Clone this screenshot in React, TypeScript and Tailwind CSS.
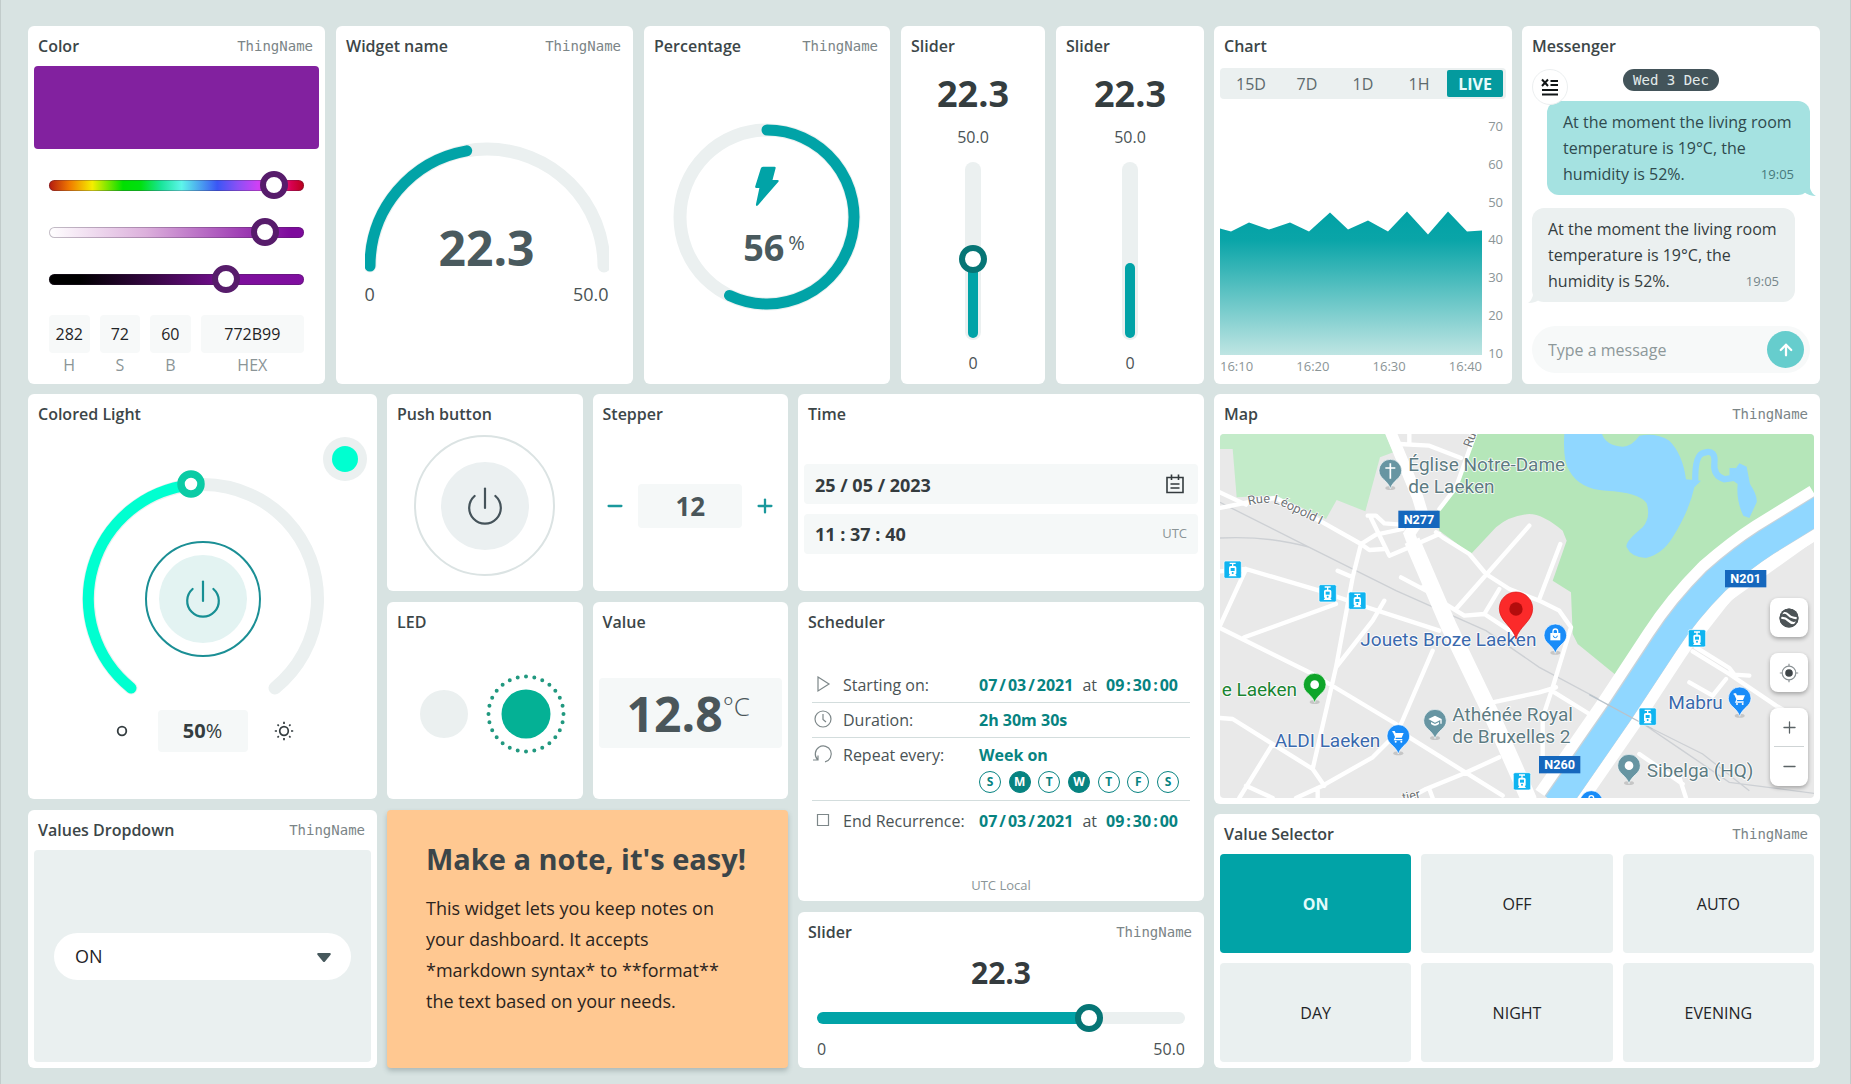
import type { ReactNode } from "react";
import { ArrowUp, Minus, Plus } from "lucide-react";

const TEAL = "#01a3a7";
const TRACK = "#ebf0f0";

function Card({
  title,
  thing,
  children,
}: {
  title: string;
  thing?: boolean;
  children: ReactNode;
}) {
  return (
    <section className="flex min-w-0 flex-col rounded-md bg-white">
      <header className="flex h-10 shrink-0 items-center justify-between pr-3 pl-[10px]">
        <h2 className="text-base font-semibold text-[#3c4648]">{title}</h2>
        {thing && (
          <span className="font-['DejaVu_Sans_Mono',monospace] text-sm text-[#7b8587]">
            ThingName
          </span>
        )}
      </header>
      {children}
    </section>
  );
}

/* ---------- Color ---------- */

const colorTracks = [
  {
    label: "Hue",
    value: 93,
    track:
      "bg-[linear-gradient(90deg,#b3190f_0%,#f07a00_8%,#f5ee00_17%,#00e000_29%,#00e010_36%,#19e59a_44%,#5df5ea_52%,#3a56f5_66%,#8a50f5_74%,#d040f5_82%,#e0209a_91%,#d80050_95%,#b80018_100%)]",
  },
  {
    label: "Saturation",
    value: 89,
    track: "bg-[linear-gradient(90deg,#ffffff,#dcb0dc_38%,#a040b5_75%,#7d0a9c_95%)]",
  },
  {
    label: "Brightness",
    value: 72,
    track: "bg-[linear-gradient(90deg,#000000_12%,#3a0748_42%,#7d0f9c_72%,#800fa0)]",
  },
];

function ColorField({ label, value }: { label: string; value: string }) {
  return (
    <label className="flex min-w-0 flex-col text-center text-base text-[#8b9597]">
      <input
        defaultValue={value}
        className="h-[38px] w-full rounded bg-[#f7f9f9] text-center text-[#1f2427]"
      />
      <span className="leading-6">{label}</span>
    </label>
  );
}

function ColorCard() {
  return (
    <Card title="Color" thing>
      <div className="mx-[6px] h-[83px] rounded bg-[#82219f]" />
      <div className="mx-[21px] mt-[22px] flex flex-col gap-[19px]">
        {colorTracks.map((t) => (
          <div key={t.label} className="flex h-7 items-center">
            <input
              type="range"
              aria-label={t.label}
              defaultValue={t.value}
              className={
                "h-[11px] w-full appearance-none rounded-full shadow-[inset_0_0_0_1px_rgba(60,40,70,0.3)] [&::-webkit-slider-thumb]:size-7 [&::-webkit-slider-thumb]:appearance-none [&::-webkit-slider-thumb]:rounded-full [&::-webkit-slider-thumb]:border-[6px] [&::-webkit-slider-thumb]:border-[#571c6b] [&::-webkit-slider-thumb]:bg-white " +
                t.track
              }
            />
          </div>
        ))}
      </div>
      <div className="mx-[21px] mt-[22px] mb-1 grid grid-cols-[40fr_40fr_40fr_102fr] gap-[10px]">
        <ColorField label="H" value="282" />
        <ColorField label="S" value="72" />
        <ColorField label="B" value="60" />
        <ColorField label="HEX" value="772B99" />
      </div>
    </Card>
  );
}

/* ---------- Gauges ---------- */

function GaugeCard() {
  return (
    <Card title="Widget name" thing>
      <div className="flex flex-1 flex-col items-center justify-center pl-1">
        <div className="w-[244px]">
          <div className="relative">
            <svg viewBox="0 0 244 138" className="block w-full" fill="none" strokeLinecap="round">
              <path d="M5 126A117 117 0 0 1 239 126" stroke={TRACK} strokeWidth="13" />
              <path d="M5 126A117 117 0 0 1 101.7 10.8" stroke={TEAL} strokeWidth="11" />
            </svg>
            <span className="absolute inset-x-0 bottom-0 text-center text-5xl leading-[60px] font-bold text-[#4a5a5e]">
              22.3
            </span>
          </div>
          <div className="flex justify-between text-lg leading-8 text-[#4a5355]">
            <span>0</span>
            <span>50.0</span>
          </div>
        </div>
      </div>
    </Card>
  );
}

function PercentageCard() {
  return (
    <Card title="Percentage" thing>
      <div className="flex flex-1 items-center justify-center pb-4">
        <div className="relative size-[188px]">
          <svg viewBox="0 0 188 188" className="size-full" fill="none" strokeLinecap="round">
            <circle cx="94" cy="94" r="87" stroke={TRACK} strokeWidth="13" />
            <path d="M94 7A87 87 0 1 1 56.5 172.5" stroke={TEAL} strokeWidth="11" />
          </svg>
          <div className="absolute inset-0 flex flex-col items-center pt-[43px]">
            <svg viewBox="0 0 24 40" className="h-10 w-6" fill={TEAL}>
              <path d="M8 .8H19.5Q21 .8 20.6 2.3L17.5 14H22.4Q24.4 14 23.4 15.8L3 39.2Q1 41 .9 38.6L4.4 22H1.5Q-.2 22 .2 20.4L5.8 2.4Q6.3.8 8 .8Z" />
            </svg>
            <p className="mt-4 flex items-start pl-[14px] text-[#4a5a5e]">
              <span className="text-4xl leading-[52px] font-bold">56</span>
              <span className="pl-1 text-xl leading-[42px]">%</span>
            </p>
          </div>
        </div>
      </div>
    </Card>
  );
}

function VerticalScale({ title, children }: { title: string; children: ReactNode }) {
  return (
    <Card title={title}>
      <div className="flex flex-1 flex-col items-center pb-[6px] text-base text-[#4a5355]">
        <span className="text-4xl leading-[56px] font-bold text-[#343d3f]">22.3</span>
        <span className="leading-[30px]">50.0</span>
        <div className="mt-[10px] mb-2 flex min-h-24 w-4 flex-1 flex-col rounded-full bg-[#ebf0f0] px-[3px] py-[2px]">
          {children}
        </div>
        <span className="leading-[30px]">0</span>
      </div>
    </Card>
  );
}

function VerticalSliderCard() {
  return (
    <VerticalScale title="Slider">
      <input
        type="range"
        aria-label="Vertical slider"
        min={0}
        max={50}
        step={0.1}
        defaultValue={22.3}
        className="min-h-0 w-[10px] flex-1 appearance-none rounded-full bg-[linear-gradient(0deg,#01a3a7_45%,transparent_45%)] [direction:rtl] [writing-mode:vertical-lr] [&::-webkit-slider-thumb]:size-7 [&::-webkit-slider-thumb]:appearance-none [&::-webkit-slider-thumb]:rounded-full [&::-webkit-slider-thumb]:border-[6px] [&::-webkit-slider-thumb]:border-[#067575] [&::-webkit-slider-thumb]:bg-white"
      />
    </VerticalScale>
  );
}

function VerticalMeterCard() {
  return (
    <VerticalScale title="Slider">
      <div className="flex flex-1 flex-col justify-end">
        <div className="h-[43%] rounded-full bg-[#01a3a7]" />
      </div>
    </VerticalScale>
  );
}

/* ---------- Chart ---------- */

function ChartCard() {
  return (
    <Card title="Chart">
      <div className="mx-[6px] mt-[2px] grid h-[31px] grid-cols-5 rounded bg-[#ebf0f0] px-[3px] py-[2px] text-base text-[#5d6a6d]">
        {["15D", "7D", "1D", "1H"].map((t) => (
          <button key={t} type="button">
            {t}
          </button>
        ))}
        <button type="button" className="rounded-xs bg-[#049a9e] font-bold text-[#e9fbfb]">
          LIVE
        </button>
      </div>
      <div className="mx-[6px] mt-[17px] mb-[6px] flex flex-1 text-[13px] text-[#8b9597]">
        <div className="flex flex-1 flex-col">
          <div className="relative flex-1">
            <svg
              viewBox="0 0 262 238"
              preserveAspectRatio="none"
              className="absolute inset-0 size-full"
            >
              <defs>
                <linearGradient id="area" x1="0" y1="95" x2="0" y2="238" gradientUnits="userSpaceOnUse">
                  <stop offset="0" stopColor="#01a1a5" />
                  <stop offset="0.2" stopColor="#0aa5a8" />
                  <stop offset="1" stopColor="#bfe5e3" />
                </linearGradient>
              </defs>
              <path
                fill="url(#area)"
                d="M0 112L11 115L29 106L49 113L70 106L89 115L110 96L128 113L148 104L168 115L187 95L208 118L228 95L247 115L262 114V238H0Z"
              />
            </svg>
          </div>
          <div className="flex h-[23px] items-center justify-between">
            <span>16:10</span>
            <span>16:20</span>
            <span>16:30</span>
            <span>16:40</span>
          </div>
        </div>
        <div className="mb-[15px] flex w-6 flex-col justify-between pr-[3px] text-right leading-5">
          {[70, 60, 50, 40, 30, 20, 10].map((n) => (
            <span key={n}>{n}</span>
          ))}
        </div>
      </div>
    </Card>
  );
}

/* ---------- Messenger ---------- */

const MESSAGE = "At the moment the living room temperature is 19°C, the humidity is 52%.";

function MessengerCard() {
  return (
    <Card title="Messenger">
      <div className="relative mx-[10px] mt-[3px] h-8">
        <button
          type="button"
          aria-label="Clear messages"
          className="absolute top-0 left-0 z-10 flex size-9 items-center justify-center rounded-full border border-[#eceff0] bg-white"
        >
          <svg viewBox="0 0 18 18" className="size-[18px]" stroke="#101516" strokeWidth="2" fill="none">
            <path d="M1 1.5L7 8M7 1.5L1 8M9.5 3H17M9.5 7H17M1 12H17M1 16.5H17" />
          </svg>
        </button>
        <p className="mx-auto h-[22px] w-fit rounded-full bg-[#43545a] px-[10px] font-['DejaVu_Sans_Mono',monospace] text-sm leading-[22px] text-[#e3ebeb]">
          Wed 3 Dec
        </p>
      </div>
      <div className="relative mr-[10px] ml-[25px] rounded-xl bg-[#a5e2e1] px-4 py-2 text-base leading-[26px] text-[#2f4a4e]">
        <p>
          {MESSAGE}
          <span className="float-right text-[13px] text-[#47797c]">19:05</span>
        </p>
        <svg viewBox="0 0 16 14" className="absolute -right-[6px] -bottom-px h-[14px] w-4" fill="#a5e2e1">
          <path d="M10 0V6Q11 11 16 14Q9 14 4 10Z" />
        </svg>
      </div>
      <div className="relative mt-[13px] mr-[25px] ml-[10px] rounded-xl bg-[#ebf0f0] px-4 py-2 text-base leading-[26px] text-[#343d40]">
        <p>
          {MESSAGE}
          <span className="float-right text-[13px] text-[#76868a]">19:05</span>
        </p>
        <svg viewBox="0 0 16 14" className="absolute -bottom-px -left-[4px] h-[14px] w-4" fill="#ebf0f0">
          <path d="M5 0V6Q4 11 0 14Q8 14 12 10Z" />
        </svg>
      </div>
      <form className="mx-[10px] mt-auto mb-[11px] flex h-[47px] items-center rounded-full bg-[#f7f9f9] pr-[6px] pl-4">
        <input
          aria-label="Message"
          placeholder="Type a message"
          className="min-w-0 flex-1 text-base placeholder:text-[#8d989a]"
        />
        <button
          type="button"
          aria-label="Send"
          className="flex size-[37px] items-center justify-center rounded-full bg-[#66cdcd] text-white"
        >
          <ArrowUp size={18} strokeWidth={3} />
        </button>
      </form>
    </Card>
  );
}

/* ---------- Switches ---------- */

function PowerIcon({ color }: { color: string }) {
  return (
    <svg viewBox="0 0 40 40" className="size-10" fill="none" stroke={color} strokeWidth="2.2" strokeLinecap="round">
      <path d="M20 2.5V22" />
      <path d="M9.6 10A15.8 15.8 0 1 0 30.4 10" />
    </svg>
  );
}

function ColoredLightCard() {
  return (
    <div className="relative grid">
      <Card title="Colored Light">
        <div className="flex flex-1 flex-col items-center justify-center pb-[10px]">
          <div className="relative h-[236px] w-64">
            <svg viewBox="0 0 256 236" className="size-full overflow-visible" fill="none" strokeLinecap="round">
              <path d="M56 217A114.5 114.5 0 1 1 200 217" stroke={TRACK} strokeWidth="13" />
              <path d="M56 217A114.5 114.5 0 0 1 116 14" stroke="#00ffd0" strokeWidth="11" />
              <circle cx="116" cy="13" r="10" fill="#fff" stroke="#0bcba5" strokeWidth="7.5" />
            </svg>
            <button
              type="button"
              aria-label="Toggle light"
              className="absolute top-[70px] left-[70px] flex size-[116px] items-center justify-center rounded-full border-2 border-[#1b8f95]"
            >
              <span className="flex size-[88px] items-center justify-center rounded-full bg-[#e3f3f2]">
                <PowerIcon color="#178f94" />
              </span>
            </button>
          </div>
          <div className="mt-[3px] flex items-center gap-[26px]">
            <svg viewBox="0 0 20 20" className="size-5" fill="none" stroke="#343d40" strokeWidth="1.8">
              <circle cx="10" cy="10" r="4.3" />
            </svg>
            <p className="w-[90px] rounded bg-[#f5f8f8] text-center text-xl leading-[42px] text-[#343d40]">
              <b>50</b>%
            </p>
            <svg viewBox="0 0 20 20" className="size-5" fill="none" stroke="#343d40" strokeWidth="1.7">
              <circle cx="10" cy="10" r="4.3" />
              <path d="M10 .8V3M10 17V19.2M.8 10H3M17 10H19.2M3.5 3.5L4.8 4.8M15.2 15.2L16.5 16.5M3.5 16.5L4.8 15.2M15.2 4.8L16.5 3.5" />
            </svg>
          </div>
        </div>
      </Card>
      <button
        type="button"
        aria-label="Light colour"
        className="absolute top-[43px] right-[10px] flex size-11 items-center justify-center rounded-full bg-[#ebf0f0]"
      >
        <span className="size-[26px] rounded-full bg-[#00ffd0]" />
      </button>
    </div>
  );
}

function PushButtonCard() {
  return (
    <Card title="Push button">
      <div className="flex flex-1 items-center justify-center pb-[14px]">
        <button
          type="button"
          aria-label="Power"
          className="flex size-[141px] items-center justify-center rounded-full border-2 border-[#dbe3e3]"
        >
          <span className="flex size-[88px] items-center justify-center rounded-full bg-[#ebf0f1]">
            <PowerIcon color="#45535a" />
          </span>
        </button>
      </div>
    </Card>
  );
}

function StepperCard() {
  return (
    <Card title="Stepper">
      <div className="flex flex-1 items-center justify-center gap-3 px-3 pb-[14px] text-[#1a989c]">
        <button type="button" aria-label="Decrease">
          <Minus size={22} strokeWidth={2.5} />
        </button>
        <input
          aria-label="Steps"
          defaultValue="12"
          className="h-11 w-[104px] rounded bg-[#f5f8f8] text-center text-[26px] font-bold text-[#4a565a]"
        />
        <button type="button" aria-label="Increase">
          <Plus size={22} strokeWidth={2.5} />
        </button>
      </div>
    </Card>
  );
}

function LedCard() {
  return (
    <Card title="LED">
      <div className="flex flex-1 items-center justify-end gap-[18px] pr-[17px] pb-[14px]">
        <span className="size-12 rounded-full bg-[#ebf0f0]" />
        <svg viewBox="0 0 80 80" className="size-20">
          <circle cx="40" cy="40" r="24.5" fill="#04b195" />
          <circle
            cx="40"
            cy="40"
            r="37.5"
            fill="none"
            stroke="#21987f"
            strokeWidth="4"
            strokeLinecap="round"
            pathLength={28}
            strokeDasharray="0 1"
          />
        </svg>
      </div>
    </Card>
  );
}

function ValueCard() {
  return (
    <Card title="Value">
      <div className="flex flex-1 items-center px-[6px] pb-4">
        <p className="flex h-[70px] flex-1 items-start justify-center rounded bg-[#f5f8f8] pr-1 text-[#4a565a]">
          <span className="text-5xl leading-[72px] font-bold">12.8</span>
          <span className="text-[26px] leading-[56px] font-light">°C</span>
        </p>
      </div>
    </Card>
  );
}

function DropdownCard() {
  return (
    <Card title="Values Dropdown" thing>
      <div className="mx-[6px] mb-[6px] flex flex-1 items-center rounded bg-[#eaf0f0] px-5">
        <div className="relative flex-1">
          <select
            aria-label="Value"
            className="h-[47px] w-full appearance-none rounded-full bg-white px-[21px] text-lg text-[#1f2427]"
          >
            <option>ON</option>
            <option>OFF</option>
          </select>
          <svg viewBox="0 0 14 9" className="pointer-events-none absolute top-5 right-5 h-[9px] w-[14px]" fill="#46585c">
            <path d="M1.2 0H12.8Q14.4.4 13.4 2L8 8.4Q7 9.4 6 8.4L.6 2Q-.4.4 1.2 0Z" />
          </svg>
        </div>
      </div>
    </Card>
  );
}

function NoteCard() {
  return (
    <article className="rounded-sm bg-[#ffc891] px-[39px] pt-[29px] shadow-[0_3px_5px_rgba(70,90,90,0.3)]">
      <h2 className="text-[29px] leading-10 font-bold text-[#3b4549]">Make a note, it's easy!</h2>
      <p className="mt-[14px] text-lg leading-[31px] text-[#2b241d]">
        This widget lets you keep notes on your dashboard. It accepts *markdown syntax* to
        **format** the text based on your needs.
      </p>
    </article>
  );
}

/* ---------- Time and schedule ---------- */

function TimeCard() {
  return (
    <Card title="Time">
      <div className="flex flex-1 flex-col justify-center gap-[10px] px-[6px] pb-2 text-lg font-bold text-[#343b3e]">
        <div className="flex h-10 items-center rounded bg-[#f5f8f8] pr-[14px] pl-[11px]">
          <input aria-label="Date" defaultValue="25 / 05 / 2023" className="min-w-0 flex-1 pt-[3px]" />
          <svg viewBox="0 0 18 20" className="h-5 w-[18px]" fill="none" stroke="#343b3e" strokeWidth="1.6">
            <path d="M1 3.5H17V18.5H1ZM5.5 .5V6M12.5 .5V6M4.5 10H13.5M4.5 14H13.5" />
          </svg>
        </div>
        <div className="flex h-10 items-center rounded bg-[#f5f8f8] px-[11px]">
          <input aria-label="Time" defaultValue="11 : 37 : 40" className="min-w-0 flex-1" />
          <span className="text-[13px] font-normal text-[#8b9597]">UTC</span>
        </div>
      </div>
    </Card>
  );
}

function DateTime() {
  return (
    <span className="flex items-center gap-[9px] font-bold text-[#078381]">
      <span className="flex gap-[2px]">
        <span>07</span>
        <span>/</span>
        <span>03</span>
        <span>/</span>
        <span>2021</span>
      </span>
      <span className="font-normal text-[#4a5355]">at</span>
      <span className="flex gap-[2px]">
        <span>09</span>
        <span>:</span>
        <span>30</span>
        <span>:</span>
        <span>00</span>
      </span>
    </span>
  );
}

const scheduleIcons = {
  start: "M4 2L15 9L4 16Z",
  duration: "M9 1A8 8 0 1 1 9 17A8 8 0 1 1 9 1M9 4V9.5L12 12",
  repeat: "M3.5 14.5A8 8 0 1 1 11 16.8M4 10.5V15H-1",
  end: "M3.5 3.5H14.5V14.5H3.5Z",
};

function ScheduleRow({
  icon,
  label,
  children,
}: {
  icon: keyof typeof scheduleIcons;
  label: string;
  children: ReactNode;
}) {
  return (
    <div className="flex border-b border-[#d3dddd] py-[5px] text-base leading-6 last:border-b-0">
      <svg
        viewBox="0 0 18 18"
        className="mx-[2px] mt-[2px] size-[18px] overflow-visible"
        fill="none"
        stroke="#7d8789"
        strokeWidth="1.2"
      >
        <path d={scheduleIcons[icon]} />
      </svg>
      <span className="ml-[9px] w-[136px] text-[#4a5355]">{label}</span>
      {children}
    </div>
  );
}

function SchedulerCard() {
  const days = ["S", "M", "T", "W", "T", "F", "S"];
  return (
    <Card title="Scheduler">
      <div className="mx-[14px] mt-[26px]">
        <ScheduleRow icon="start" label="Starting on:">
          <DateTime />
        </ScheduleRow>
        <ScheduleRow icon="duration" label="Duration:">
          <b className="text-[#078381]">2h 30m 30s</b>
        </ScheduleRow>
        <ScheduleRow icon="repeat" label="Repeat every:">
          <div>
            <b className="text-[#078381]">Week on</b>
            <div className="mt-1 mb-[2px] flex w-[200px] justify-between">
              {days.map((d, i) => (
                <button
                  key={i}
                  type="button"
                  aria-pressed={i === 1 || i === 3}
                  className="flex size-[22px] items-center justify-center rounded-full border border-[#078381] text-xs font-bold text-[#078381] aria-pressed:bg-[#078381] aria-pressed:text-white"
                >
                  {d}
                </button>
              ))}
            </div>
          </div>
        </ScheduleRow>
        <div className="pt-[3px]">
          <ScheduleRow icon="end" label="End Recurrence:">
            <DateTime />
          </ScheduleRow>
        </div>
      </div>
      <p className="mt-auto pb-[6px] text-center text-[13px] leading-5 text-[#8b9597]">UTC Local</p>
    </Card>
  );
}

function HorizontalSliderCard() {
  return (
    <Card title="Slider" thing>
      <p className="text-center text-[30px] leading-[42px] font-bold text-[#343b3e]">22.3</p>
      <div className="mx-[19px] mt-[10px] flex h-7 items-center">
        <input
          type="range"
          aria-label="Horizontal slider"
          defaultValue={76}
          className="h-3 w-full appearance-none rounded-full bg-[linear-gradient(90deg,#01a3a7_74%,#ebf0f0_74%)] [&::-webkit-slider-thumb]:size-7 [&::-webkit-slider-thumb]:appearance-none [&::-webkit-slider-thumb]:rounded-full [&::-webkit-slider-thumb]:border-[6px] [&::-webkit-slider-thumb]:border-[#067575] [&::-webkit-slider-thumb]:bg-white"
        />
      </div>
      <div className="mx-[19px] mt-[5px] flex justify-between text-base leading-6 text-[#4a5355]">
        <span>0</span>
        <span>50.0</span>
      </div>
    </Card>
  );
}

/* ---------- Map ---------- */

type Glyph = "cross" | "dot" | "cart" | "cap" | "bag" | "none";

function Pin({ x, y, color, glyph }: { x: number; y: number; color: string; glyph: Glyph }) {
  return (
    <g transform={`translate(${x} ${y})`}>
      <ellipse cx="0" cy="52" rx="15" ry="6" fill="#000" opacity="0.15" />
      <path d="M0 -34A34 34 0 0 1 34 0C34 24 8 28 0 54C-8 28 -34 24 -34 0A34 34 0 0 1 0 -34Z" fill={color} stroke="#fff" strokeWidth="2" />
      {glyph === "cross" && <path d="M0 -22V24M-15 -8H15" stroke="#fff" strokeWidth="5" />}
      {glyph === "dot" && <circle r="13" fill="#fff" />}
      {glyph === "cart" && (
        <g fill="#fff">
          <path d="M-18 -15H-11L-8 -9H16L10 5H-7L-9 9H12V13H-14L-10 3L-16 -11H-18Z" />
          <circle cx="-8" cy="17" r="3" />
          <circle cx="9" cy="17" r="3" />
        </g>
      )}
      {glyph === "cap" && (
        <path d="M-20 -5L0 -15L20 -5V9H16V-2L0 6ZM-12 4V10Q0 20 12 10V4L0 10Z" fill="#fff" />
      )}
      {glyph === "bag" && (
        <g>
          <path d="M-15 -7H15V15H-15Z" fill="#fff" />
          <path d="M-7 -6V-12A7 7 0 0 1 7 -12V-6" stroke="#fff" strokeWidth="4" fill="none" />
          <path d="M-6 1A6 6 0 0 0 6 1" stroke={color} strokeWidth="3" fill="none" />
        </g>
      )}
    </g>
  );
}

function Tram({ x, y }: { x: number; y: number }) {
  return (
    <g transform={`translate(${x} ${y})`}>
      <rect x="-26" y="-26" width="52" height="52" rx="5" fill="#0fb4f0" stroke="#fff" strokeWidth="2" />
      <path d="M-9 -19H9M0 -19V-10" stroke="#fff" strokeWidth="4" fill="none" />
      <path d="M-6 -11H6Q11 -11 11 -6V11Q11 14 8 14L12 20H-12L-8 14Q-11 14 -11 11V-6Q-11 -11 -6 -11Z" fill="#fff" />
      <path d="M-6 -5H6V4H-6Z" fill="#0fb4f0" />
      <circle cx="0" cy="10" r="3" fill="#0fb4f0" />
    </g>
  );
}

function RoadSign({ x, y, name }: { x: number; y: number; name: string }) {
  return (
    <g>
      <rect x={x} y={y} width="124" height="52" fill="#1567bd" />
      <text x={x + 62} y={y + 39} textAnchor="middle" fontSize="38" fontWeight="700" fill="#fff">
        {name}
      </text>
    </g>
  );
}

const minorRoads =
  "M32 335L110 372M32 382L140 360L200 352L340 425L455 490L500 462L580 445M455 490L430 590L380 860L310 1165L345 1215M455 490L480 508L525 505M475 405H500L525 428L575 432M485 412L540 525L600 500L690 460M680 455L700 470L780 520L830 580L900 625L990 660L1050 690L1085 740L1030 920L1000 1010V1140M960 435L740 685M640 620L700 665L765 705L825 700L920 762M870 625L825 700M575 590L650 630M32 572L110 565L330 630L480 682L690 750M110 565L32 735M32 742L310 880L560 1030L600 1070L880 1245M105 770L380 670M525 660L490 720L380 860M385 570L430 590M670 810L575 1030M560 1060L490 1130L340 1215L260 1252M32 1012L70 1015L310 1165M190 1090L90 1252M110 1215L190 1252M325 1222V1252M870 1130L760 1180L650 1225L600 1252M660 1225L670 1252M850 965L990 935L1040 920M1035 935L1140 1000M570 190L660 195L755 232M600 160V190M797 160L740 320L690 385M1053 490L990 655M1450 812L1560 880L1700 975L1780 1020M1460 800L1560 862L1575 882L1620 885M1440 905L1510 945L1550 895M1830 462L1560 655L1470 770M1290 1120L1420 1210M1410 1190L1430 1252";

function MapDrawing() {
  return (
    <svg
      viewBox="32 160 1782 1092"
      preserveAspectRatio="xMidYMid slice"
      className="absolute inset-0 size-full font-['Roboto',sans-serif]"
      fill="none"
    >
      <rect x="32" y="160" width="1782" height="1092" fill="#e9e9e9" />
      <path d="M32 160H528L552 215L512 230L468 392L382 358L350 415L200 345L82 350L70 205H32Z" fill="#c3ebc9" />
      <path
        d="M800 160H1830V330L1620 440L1530 515L1440 600L1290 790L1222 885L1105 790L1090 760L1085 635L1030 600L1072 480L1060 450Q1000 400 960 400Q900 405 860 440L785 520L690 450L680 395L740 320Z"
        fill="#b5e6b9"
      />
      <path
        d="M1065 160Q1060 240 1080 270Q1110 325 1190 330Q1290 335 1312 368Q1325 410 1300 440Q1245 485 1252 500Q1265 530 1310 532Q1360 520 1390 470Q1440 390 1455 320L1475 300L1430 296Q1420 220 1380 180Q1340 155 1290 165Q1270 195 1240 198Q1190 195 1178 160Z"
        fill="#90d7ff"
      />
      <path d="M1458 308Q1455 220 1485 216Q1520 205 1515 250Q1512 285 1545 296L1570 292V262" stroke="#90d7ff" strokeWidth="19" />
      <path d="M1590 248L1612 258L1622 310Q1645 345 1642 365L1620 412L1602 405Q1580 360 1585 310L1560 292Z" fill="#90d7ff" />

      <path
        d="M32 365L300 500L560 630L830 750L990 860L1280 1015L1420 1110L1560 1205L1830 1240M32 472Q180 465 300 500M1330 1045L1480 1120L1620 1230"
        stroke="#cdd0d4"
        strokeWidth="4"
      />
      <path d={minorRoads} stroke="#fff" strokeWidth="13" strokeLinejoin="round" strokeLinecap="round" />
      <path d="M542 150L625 350L640 400L600 460L615 500L700 680" stroke="#fff" strokeWidth="34" />
      <path d="M608 480L720 740L850 1010L930 1190L960 1260" stroke="#fff" strokeWidth="48" />

      <path
        d="M1040 1270L1227 1000L1365 790Q1430 690 1520 600Q1600 530 1670 485L1840 380"
        stroke="#fff"
        strokeWidth="150"
      />
      <path
        d="M1040 1270L1227 1000L1365 790Q1430 690 1520 600Q1600 530 1670 485L1840 380"
        stroke="#c9d3da"
        strokeWidth="84"
      />
      <path
        d="M1042 1270L1229 1000L1367 790Q1432 690 1522 600Q1602 530 1672 485L1842 380"
        stroke="#90d7ff"
        strokeWidth="79"
      />
      <path d="M1140 942L1330 1045" stroke="#b9c3cb" strokeWidth="4" />

      <Tram x={70} y={567} />
      <Tram x={355} y={638} />
      <Tram x={444} y={660} />
      <Tram x={938} y={1202} />
      <Tram x={1463} y={773} />
      <Tram x={1315} y={1008} />
      <Pin x={543} y={270} color="#6795a2" glyph="cross" />
      <Pin x={316} y={912} color="#0fa52a" glyph="dot" />
      <Pin x={567} y={1066} color="#198cf8" glyph="cart" />
      <Pin x={677} y={1020} color="#6795a2" glyph="cap" />
      <Pin x={1038} y={764} color="#198cf8" glyph="bag" />
      <Pin x={1591} y={953} color="#198cf8" glyph="cart" />
      <Pin x={1259} y={1155} color="#6795a2" glyph="dot" />
      <Pin x={1146} y={1264} color="#198cf8" glyph="bag" />

      <g fontSize="57" stroke="#fff" strokeWidth="5" strokeLinejoin="round" paintOrder="stroke">
        <g fill="#5d7b82">
          <text x="597" y="271">Église Notre-Dame</text>
          <text x="597" y="336">de Laeken</text>
          <text x="729" y="1022">Athénée Royal</text>
          <text x="729" y="1087">de Bruxelles 2</text>
          <text x="1312" y="1189">Sibelga (HQ)</text>
        </g>
        <g fill="#3a69ad">
          <text x="453" y="797">Jouets Broze Laeken</text>
          <text x="196" y="1100">ALDI Laeken</text>
          <text x="1377" y="986">Mabru</text>
        </g>
        <text x="37" y="945" fill="#1a8432">
          e Laeken
        </text>
      </g>
      <path id="leopold" d="M118 374Q185 356 230 382L360 446" />
      <g fontSize="38" fill="#6d7275" stroke="#fff" strokeWidth="4" paintOrder="stroke">
        <text>
          <textPath href="#leopold">Rue Léopold I</textPath>
        </text>
        <text transform="translate(786 202) rotate(-70)">Ru</text>
        <text transform="translate(582 1264) rotate(-14)">tier</text>
      </g>
      <RoadSign x={567} y={390} name="N277" />
      <RoadSign x={1547} y={568} name="N201" />
      <RoadSign x={989} y={1126} name="N260" />

      <path d="M920 775C912 738 870 722 870 684A50 50 0 0 1 970 684C970 722 928 738 920 775Z" fill="#fb2a2a" stroke="#d11" strokeWidth="2" />
      <circle cx="920" cy="685" r="20" fill="#b30d0d" />
    </svg>
  );
}

function MapCard() {
  return (
    <Card title="Map" thing>
      <div className="relative mx-[6px] mb-[6px] flex-1 overflow-hidden rounded">
        <MapDrawing />
        <div className="absolute right-[6px] bottom-3 flex w-[38px] flex-col gap-4 text-[#5b6366]">
          <button
            type="button"
            aria-label="Satellite view"
            className="flex h-[39px] items-center justify-center rounded-lg bg-white shadow-[0_2px_4px_rgba(0,0,0,0.3)]"
          >
            <svg viewBox="0 0 20 20" className="size-5" fill="none">
              <circle cx="10" cy="10" r="9.5" fill="#4d5457" />
              <path
                d="M2 5.6C7 3.4 8.6 6 10.4 7.8S15 9.8 18 10.2M2 10C5 9.6 7.4 10.6 9.4 12.6S14.5 15.6 17.4 14.6"
                stroke="#fff"
                strokeWidth="2.2"
              />
              <circle cx="10" cy="10" r="8.7" stroke="#4d5457" strokeWidth="1.8" />
            </svg>
          </button>
          <button
            type="button"
            aria-label="My location"
            className="flex h-[39px] items-center justify-center rounded-lg bg-white shadow-[0_2px_4px_rgba(0,0,0,0.3)]"
          >
            <svg viewBox="0 0 20 20" className="size-5" fill="none" stroke="#8b9295" strokeWidth="1.2">
              <circle cx="10" cy="10" r="6.8" />
              <circle cx="10" cy="10" r="3.8" fill="#3f4548" stroke="none" />
              <path d="M10 .8V3.2M10 16.8V19.2M.8 10H3.2M16.8 10H19.2" />
            </svg>
          </button>
          <div className="flex flex-col rounded-lg bg-white px-1 shadow-[0_2px_4px_rgba(0,0,0,0.3)]">
            <button
              type="button"
              aria-label="Zoom in"
              className="flex h-[39px] items-center justify-center border-b border-[#cfd4d5]"
            >
              <Plus size={19} strokeWidth={1.6} />
            </button>
            <button type="button" aria-label="Zoom out" className="flex h-[39px] items-center justify-center">
              <Minus size={19} strokeWidth={1.6} />
            </button>
          </div>
        </div>
      </div>
    </Card>
  );
}

function SelectorCard() {
  return (
    <Card title="Value Selector" thing>
      <div className="mx-[6px] mb-[6px] grid flex-1 grid-cols-3 grid-rows-2 gap-[10px] text-base text-[#1f2427]">
        {["ON", "OFF", "AUTO", "DAY", "NIGHT", "EVENING"].map((v) => (
          <button
            key={v}
            type="button"
            aria-pressed={v === "ON"}
            className="rounded-sm bg-[#eaf0f0] aria-pressed:bg-[#01a3a7] aria-pressed:font-bold aria-pressed:text-[#e3fbfb]"
          >
            {v}
          </button>
        ))}
      </div>
    </Card>
  );
}

export default function App() {
  return (
    <main className="grid min-h-screen grid-cols-[1176fr_606fr] grid-rows-[358fr_674fr] gap-[10px] border-x border-[#c2cccb] bg-[#d8e3e2] pt-[26px] pr-[30px] pb-4 pl-[27px] font-['Open_Sans',sans-serif]">
      <div className="grid grid-cols-[297fr_297fr_246fr_144fr_148fr] gap-[11px]">
        <ColorCard />
        <GaugeCard />
        <PercentageCard />
        <VerticalSliderCard />
        <VerticalMeterCard />
      </div>
      <div className="grid grid-cols-2 gap-[10px]">
        <ChartCard />
        <MessengerCard />
      </div>
      <div className="grid grid-cols-[349fr_401fr_406fr] gap-[10px]">
        <div className="grid grid-rows-[405fr_258fr] gap-[11px]">
          <ColoredLightCard />
          <DropdownCard />
        </div>
        <div className="grid grid-rows-[405fr_258fr] gap-[11px]">
          <div className="grid grid-cols-2 grid-rows-2 gap-x-[10px] gap-y-[11px]">
            <PushButtonCard />
            <StepperCard />
            <LedCard />
            <ValueCard />
          </div>
          <NoteCard />
        </div>
        <div className="grid grid-rows-[197fr_299fr_156fr] gap-[11px]">
          <TimeCard />
          <SchedulerCard />
          <HorizontalSliderCard />
        </div>
      </div>
      <div className="grid grid-rows-[410fr_254fr] gap-[10px]">
        <MapCard />
        <SelectorCard />
      </div>
    </main>
  );
}
